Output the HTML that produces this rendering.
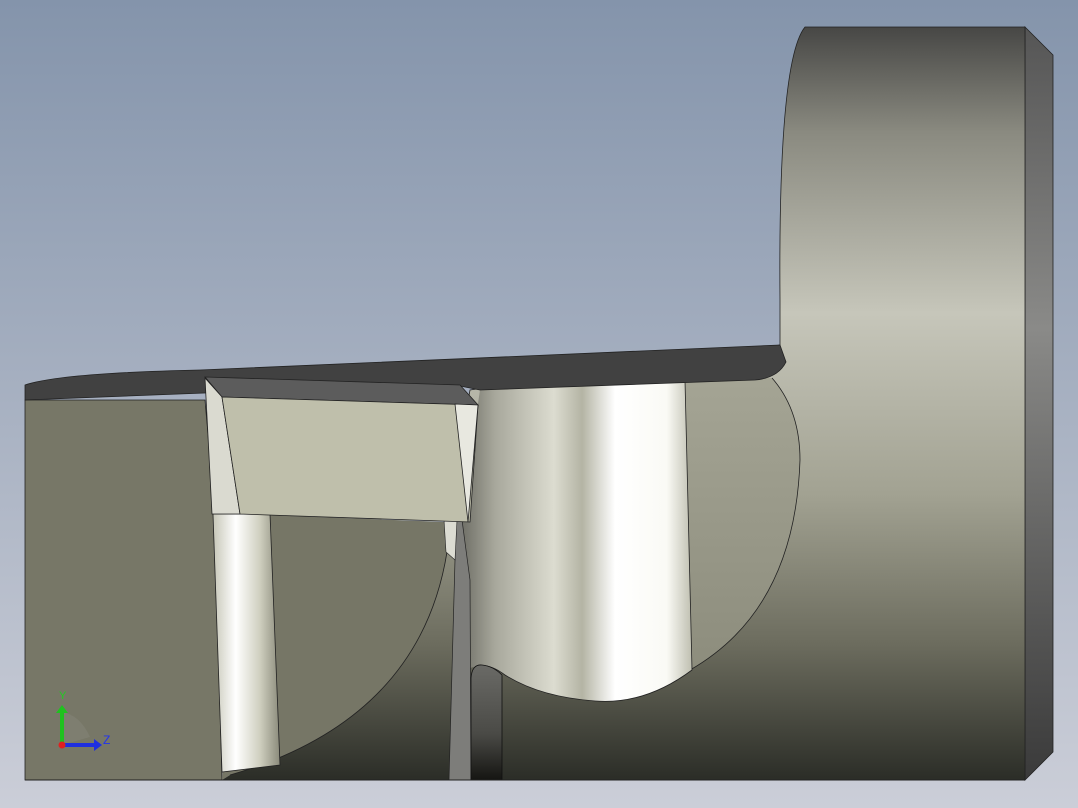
<!DOCTYPE html>
<html><head><meta charset="utf-8"><style>html,body{margin:0;padding:0;width:1078px;height:808px;overflow:hidden}svg{display:block}</style></head>
<body>
<svg width="1078" height="808" viewBox="0 0 1078 808" xmlns="http://www.w3.org/2000/svg">
<defs>
<linearGradient id="bg" x1="0" y1="0" x2="0" y2="1"><stop offset="0" stop-color="#8494ab"/><stop offset="1" stop-color="#cbced8"/></linearGradient>
<linearGradient id="body" x1="0" y1="27" x2="0" y2="780" gradientUnits="userSpaceOnUse">
<stop offset="0" stop-color="#474745"/><stop offset="0.14" stop-color="#8a8a80"/><stop offset="0.38" stop-color="#c6c6ba"/><stop offset="0.62" stop-color="#a2a292"/><stop offset="0.82" stop-color="#6c6c5e"/><stop offset="1" stop-color="#2b2d27"/></linearGradient>
<linearGradient id="side" x1="0" y1="0" x2="0" y2="1"><stop offset="0" stop-color="#555"/><stop offset="0.4" stop-color="#8a8a88"/><stop offset="1" stop-color="#3a3a3a"/></linearGradient>
<linearGradient id="cyl" x1="460" y1="0" x2="695" y2="0" gradientUnits="userSpaceOnUse">
<stop offset="0" stop-color="#6c6c64"/><stop offset="0.15" stop-color="#a8a89c"/><stop offset="0.4" stop-color="#dcdcd0"/><stop offset="0.52" stop-color="#b4b4a4"/><stop offset="0.66" stop-color="#ffffff"/><stop offset="0.88" stop-color="#fafaf5"/><stop offset="1" stop-color="#b8b8a8"/></linearGradient>
<linearGradient id="pil" x1="212" y1="0" x2="280" y2="0" gradientUnits="userSpaceOnUse">
<stop offset="0" stop-color="#c4c4b4"/><stop offset="0.35" stop-color="#ffffff"/><stop offset="0.7" stop-color="#d0d0c0"/><stop offset="1" stop-color="#8a8a7a"/></linearGradient>
<linearGradient id="olv" x1="0" y1="380" x2="0" y2="680" gradientUnits="userSpaceOnUse"><stop offset="0" stop-color="#a4a494"/><stop offset="1" stop-color="#8c8c7c"/></linearGradient>
<linearGradient id="slot" x1="0" y1="665" x2="0" y2="780" gradientUnits="userSpaceOnUse"><stop offset="0" stop-color="#6a6a66"/><stop offset="0.6" stop-color="#4a4a46"/><stop offset="1" stop-color="#151512"/></linearGradient>
</defs>
<rect width="1078" height="808" fill="url(#bg)"/>
<polygon points="1025,27 1053,55 1053,752 1025,780" fill="url(#side)" stroke="#222" stroke-width="0.8"/>
<path d="M805,27 L1025,27 L1025,780 L440,780 L440,560 L470,390 L780,345 L780,300 Q778,60 805,27 Z" fill="url(#body)" stroke="#222" stroke-width="0.8"/>
<path d="M685,380 L772,378 Q800,410 800,460 Q795,610 690,670 Z" fill="url(#olv)"/>
<path d="M772,378 Q800,410 800,460 Q795,610 690,670" fill="none" stroke="#222" stroke-width="0.8"/>
<path d="M480,390 L685,381 L692,670 Q645,705 595,701 Q540,697 505,675 Q488,662 470,668 L455,560 Z" fill="url(#cyl)"/>
<path d="M685,381 L692,670 Q645,705 595,701 Q540,697 505,675 Q488,662 475,667" fill="none" stroke="#222" stroke-width="0.8"/>
<path d="M25,400 L205,400 L215,515 L222,780 L25,780 Z" fill="#777767" stroke="#222" stroke-width="0.8"/>
<path d="M240,514 L445,522 L447,552 Q420,720 230,775 L222,780 Z" fill="#767666"/>
<path d="M447,552 Q420,720 230,775 L222,780 L456,780 L456,552 Z" fill="url(#body)"/>
<path d="M447,552 Q420,720 230,775" fill="none" stroke="#222" stroke-width="0.8"/>
<path d="M455,520 L462,520 L470,580 L471,780 L449,780 L455,560 Z" fill="#7d7d7a" stroke="#222" stroke-width="0.7"/>
<path d="M444,520 L457,520 L455,560 L446,552 Z" fill="#dcdcd2" stroke="#222" stroke-width="0.6"/>
<path d="M471,780 L471,678 Q472,664 482,665 Q493,666 502,675 L502,780 Z" fill="url(#slot)" stroke="#111" stroke-width="0.8"/>
<path d="M213,514 L270,514 L280,765 L222,772 Z" fill="url(#pil)" stroke="#222" stroke-width="0.8"/>
<path d="M25,385 Q60,373 200,370 L780,345 L786,362 Q778,378 755,380 L480,390 L460,386 L205,393 L25,400 Z" fill="#414141" stroke="#222" stroke-width="0.8"/>
<polygon points="205,377 460,385 478,405 222,397" fill="#5c5c5c" stroke="#222" stroke-width="0.8"/>
<polygon points="205,378 222,397 240,514 212,514" fill="#dadad0" stroke="#222" stroke-width="0.8"/>
<polygon points="222,397 478,405 470,522 240,514" fill="#bfbfab" stroke="#222" stroke-width="0.8"/>
<polygon points="455,404 478,405 468,522" fill="#e8e8e0" stroke="#222" stroke-width="0.8"/>
<line x1="25" y1="780" x2="1025" y2="780" stroke="#222" stroke-width="1"/>
<path d="M62,745 L62,712 Q80,715 90,737" fill="#85857a" opacity="0.5"/>
<line x1="62" y1="745" x2="62" y2="712" stroke="#1fc21f" stroke-width="4"/>
<polygon points="56,713 68,713 62,705" fill="#1fc21f"/>
<line x1="62" y1="745" x2="95" y2="745" stroke="#1f2fe0" stroke-width="4"/>
<polygon points="94,739 94,751 102,745" fill="#1f2fe0"/>
<circle cx="62" cy="745" r="3.5" fill="#e02020"/>
<text x="59" y="699" font-family="Liberation Sans, sans-serif" font-size="11" fill="#22cc22">Y</text>
<text x="103" y="744" font-family="Liberation Sans, sans-serif" font-size="12" fill="#2233ee">Z</text>
</svg>
</body></html>
